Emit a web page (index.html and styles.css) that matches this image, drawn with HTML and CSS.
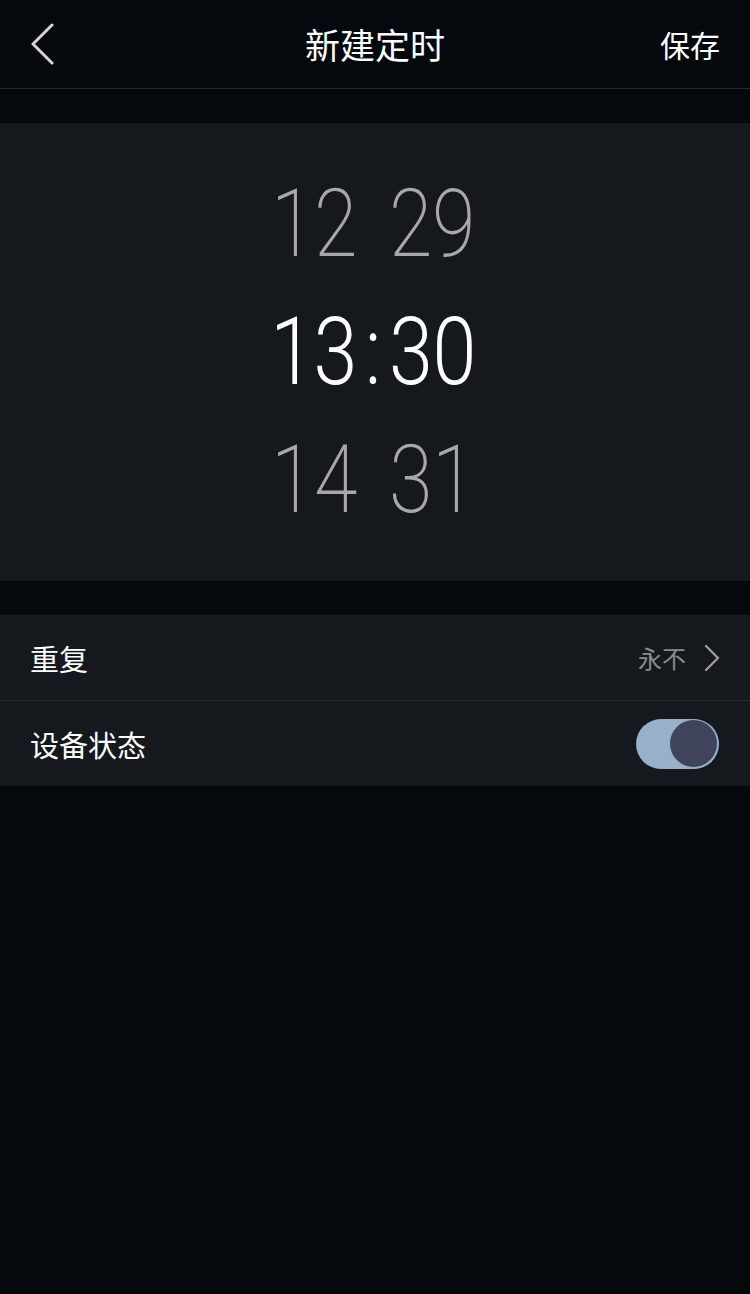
FILE: index.html
```html
<!DOCTYPE html>
<html lang="zh-CN">
<head>
<meta charset="utf-8">
<title>新建定时</title>
<link rel="stylesheet" href="styles.css">
</head>
<body>
<div class="screen">
  <header class="topbar">
    <button class="back" aria-label="返回">
      <svg width="26" height="42" viewBox="0 0 26 42"><path d="M23 2 L4 21 L23 40" fill="none" stroke="#d4d4d4" stroke-width="3" stroke-linecap="round" stroke-linejoin="round"/></svg>
    </button>
    <h1 class="title">新建定时</h1>
    <span class="save">保存</span>
  </header>

  <section class="picker">
    <div class="prow dim"><span class="h">12</span><span class="sep"></span><span class="m">29</span></div>
    <div class="prow cur"><span class="h">13</span><span class="sep">:</span><span class="m">30</span></div>
    <div class="prow dim"><span class="h">14</span><span class="sep"></span><span class="m">31</span></div>
  </section>

  <section class="list">
    <div class="item">
      <span class="label">重复</span>
      <span class="value">永不
        <svg width="16" height="28" viewBox="0 0 16 28"><path d="M2 2 L14 14 L2 26" fill="none" stroke="#9a9c9f" stroke-width="2.4" stroke-linecap="round" stroke-linejoin="round"/></svg>
      </span>
    </div>
    <div class="item">
      <span class="label">设备状态</span>
      <span class="toggle"><span class="knob"></span></span>
    </div>
  </section>
</div>
</body>
</html>
```

FILE: styles.css
```css
* { box-sizing: border-box; }
html, body { margin: 0; padding: 0; }
body {
  background: #05090d;
  font-family: "Noto Sans CJK SC", "Noto Sans", sans-serif;
  color: #fff;
  width: 750px;
  height: 1294px;
  overflow: hidden;
}
.screen { width: 750px; min-height: 1294px; background: #05090d; }
.topbar {
  height: 89px;
  border-bottom: 1px solid #25282b;
  display: flex;
  align-items: center;
  justify-content: space-between;
  padding: 0 30px 0 29px;
  position: relative;
}
.back {
  background: none; border: 0; padding: 0; margin: 0;
  width: 26px; height: 42px; display: flex;
  margin-top: -1px;
}
.title {
  position: absolute; left: 0; right: 0; top: 0;
  margin: 0; text-align: center;
  font-size: 35px; font-weight: 400; line-height: 88px;
  pointer-events: none;
}
.save { font-size: 30px; line-height: 88px; }

.picker {
  margin-top: 34px;
  height: 458px;
  background: #15181c;
  padding-top: 37px;
}
.prow {
  display: grid;
  grid-template-columns: 357px 32px 1fr;
  height: 128px;
  align-items: center;
  font-family: "Roboto", "Liberation Sans", sans-serif;
  font-size: 94px;
  line-height: 128px;
  font-weight: 200;
}
.prow .h { text-align: right; letter-spacing: -0.5px; transform: scaleX(0.84); transform-origin: right center; }
.prow .m { text-align: left; letter-spacing: -0.5px; transform: scaleX(0.84); transform-origin: left center; }
.prow .sep { text-align: center; transform: scaleX(0.84); }
.prow.dim { color: #a6a8aa; }
.prow.cur { color: #ffffff; font-weight: 300; }

.list {
  margin-top: 34px;
  background: #15181c;
}
.item {
  height: 85px;
  display: flex;
  align-items: center;
  justify-content: space-between;
  padding: 0 30px 0 30px;
}
.item + .item { border-top: 1px solid #2a2d31; height: 86px; }
.label { font-size: 29px; }
.value {
  display: flex; align-items: center; gap: 18px;
  font-size: 24px; color: #8a8c8f;
}
.toggle {
  width: 83px; height: 50px; border-radius: 25px;
  background: #97b1c9;
  display: flex; align-items: center; justify-content: flex-end;
  padding-right: 2px;
  margin-right: 1px;
}
.knob {
  width: 47px; height: 47px; border-radius: 50%;
  background: #3f435b;
}
```
